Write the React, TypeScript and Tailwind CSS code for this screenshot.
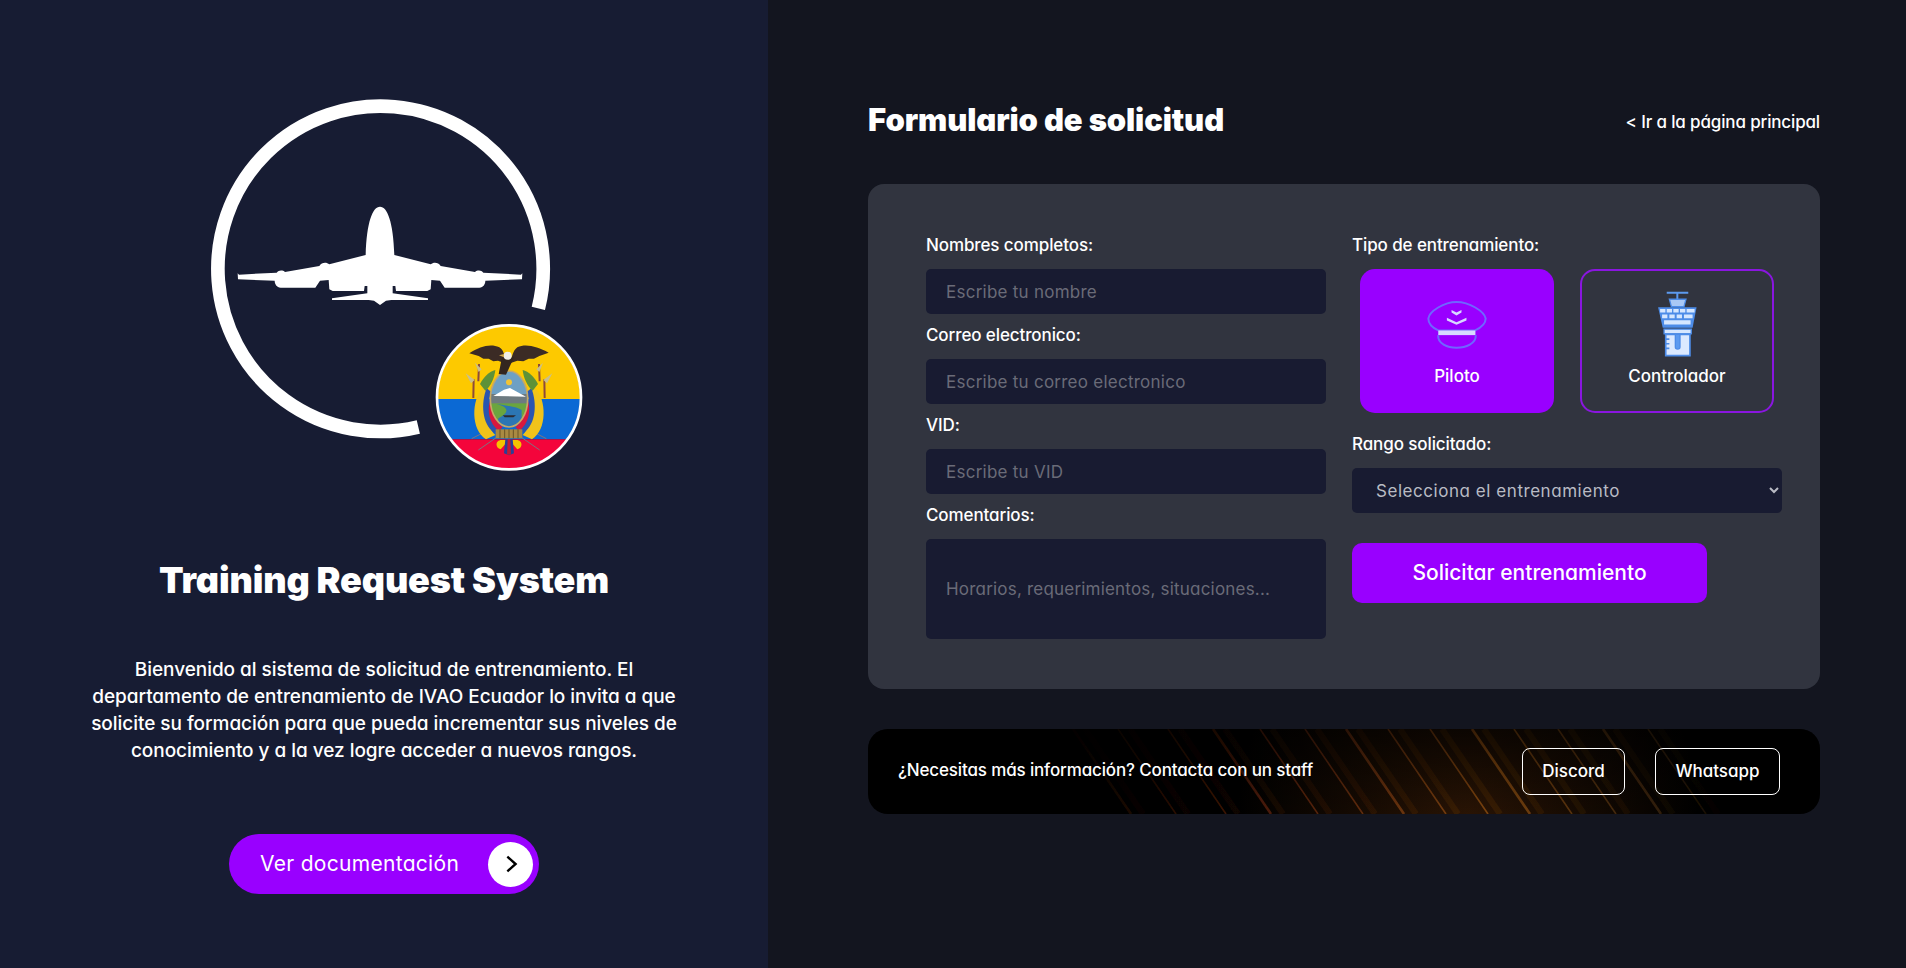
const Emblem = () => (
  <svg viewBox="0 0 1260 1200" className="w-[420px] h-[400px] ml-8 shrink-0">
    <path d="M1045 685 A488 488 0 1 0 685 1041" fill="none" stroke="#fff" strokeWidth="41" />
    {/* plane */}
    <path
      fill="#fff"
      d="M570 380 C592 380 610 425 613 525 L722 553 C730 546 745 546 752 558 L855 576 C862 570 874 570 880 578 L993 584 L997 580 L996 598 L886 602 C886 612 880 622 868 623 L764 623 L750 602 L724 600 L722 628 L712 633 L618 633 L616 618 L608 618 L608 640 L714 655 L714 660 L604 660 L588 662 L570 675 L552 662 L536 660 L426 660 L426 655 L532 640 L532 618 L524 618 L522 633 L428 633 L418 628 L416 600 L390 602 L376 623 L272 623 C260 622 254 612 254 602 L144 598 L143 580 L147 584 L260 578 C266 570 278 570 285 576 L388 558 C395 546 410 546 418 553 L527 525 C530 425 548 380 570 380 Z"
    />
    {/* flag, coordinates relative to the badge crop */}
    <g transform="translate(720 720)">
      <defs>
        <clipPath id="flagClip">
          <circle cx="237" cy="232" r="214" />
        </clipPath>
        <clipPath id="ovalClip">
          <ellipse cx="237" cy="237" rx="56" ry="84" />
        </clipPath>
      </defs>
      <g clipPath="url(#flagClip)">
        <rect x="0" y="0" width="480" height="237" fill="#fdc900" />
        <rect x="0" y="237" width="480" height="121" fill="#0b69d4" />
        <rect x="0" y="358" width="480" height="130" fill="#f4053b" />
      </g>
      <circle cx="237" cy="232" r="216" fill="none" stroke="#fff" strokeWidth="8" />
      {/* spears */}
      <path d="M145 390 L200 352 M329 390 L274 352 M125 356 L160 338 M349 356 L314 338" stroke="#7d7480" strokeWidth="3" />
      {/* drapes */}
      {[0, 1].map((side) => (
        <g key={side} transform={side ? 'translate(474 0) scale(-1 1)' : undefined}>
          <path d="M158 205 C124 240 122 330 168 358 L196 345 C168 320 164 250 180 212 Z" fill="#f0c31a" />
          <path d="M170 205 C152 250 156 312 192 338 L206 330 C176 305 170 250 184 216 Z" fill="#2a55b0" />
          <path d="M181 238 C170 272 178 312 206 332 L218 322 C192 300 184 268 188 234 Z" fill="#d8183e" />
          <path d="M147 132 L145 184 M131 178 L130 234" stroke="#8c4a3c" strokeWidth="6" />
          <path d="M135 128 L155 148 L146 156 Z M107 160 L134 180 L123 190 Z" fill="#c9bf8c" />
          <path d="M150 192 C160 172 178 154 196 150 C194 172 182 200 166 212 Z" fill="#5e9138" />
        </g>
      ))}
      {/* oval */}
      <g clipPath="url(#ovalClip)">
        <rect x="170" y="150" width="140" height="80" fill="#6ea0c4" />
        <rect x="170" y="222" width="140" height="30" fill="#6d7a80" />
        <path d="M190 228 L222 209 L240 204 L262 216 L288 230 Z" fill="#fff" />
        <rect x="170" y="250" width="140" height="80" fill="#6aa53f" />
        <path d="M200 252 C250 265 225 285 205 295 L200 325 L275 325 L275 270 C262 262 240 258 200 252 Z" fill="#2c76b4" />
        <path d="M218 286 L258 286 L250 292 L224 292 Z" fill="#2b2b33" />
        <circle cx="237" cy="187" r="9" fill="#f3c433" />
      </g>
      <ellipse cx="237" cy="237" rx="56" ry="84" fill="none" stroke="#c5a868" strokeWidth="5" />
      {/* fasces and ribbon */}
      <path d="M215 360 C195 360 195 385 212 388 L237 360 L262 388 C279 385 279 360 259 360 Z" fill="#f5c400" />
      <path d="M226 358 L222 400 L237 406 L252 400 L248 358 Z" fill="#2a3f96" />
      <path d="M233 358 L231 404 L243 404 L241 358 Z" fill="#c21a35" />
      <rect x="197" y="328" width="80" height="27" fill="#a98a42" />
      <path d="M210 328 V355 M224 328 V355 M237 328 V355 M250 328 V355 M264 328 V355" stroke="#6a5424" strokeWidth="3" />
      {/* condor */}
      <path d="M118 100 C150 80 180 70 208 82 C222 92 226 108 220 128 L204 122 L190 124 L176 116 L160 116 L146 108 Z" fill="#3b2b25" />
      <path d="M356 98 C322 80 288 70 262 82 C248 92 246 112 240 130 L262 122 L280 124 L296 116 L312 116 L328 108 Z" fill="#3b2b25" />
      <path d="M216 112 L252 112 L228 164 L206 162 Z" fill="#33261f" />
      <circle cx="233" cy="107" r="12" fill="#f1efe8" />
      <path d="M222 102 L207 106 L222 112 Z" fill="#d3a94a" />
    </g>
  </svg>
)

const HatIcon = () => (
  <svg viewBox="260 142 190 155" className="w-[63px] h-[52px]">
    <path d="M297 236 C280 228 267 215 267 200 C270 178 315 150 352 150 C390 150 436 178 440 200 C440 215 425 228 408 236 Z" fill="none" stroke="#6f66ff" strokeWidth="6" />
    <rect x="297" y="236" width="112" height="14" fill="#d7d9ff" />
    <path d="M297 250 C294 275 325 288 352 288 C380 288 412 275 410 250" fill="none" stroke="#6f66ff" strokeWidth="6" />
    <path d="M337 174 L352 182 L367 174 L367 182 L352 191 L337 182 Z" fill="#d7d9ff" />
    <path d="M323 198 L352 211 L382 198 L382 206 L352 219 L323 206 Z" fill="#d7d9ff" />
  </svg>
)

const TowerIcon = () => (
  <svg viewBox="945 118 135 205" className="w-[45px] h-[68px]">
    <path d="M980 126 H1045 M1012 126 V146" stroke="#5c9af0" strokeWidth="6" />
    <path d="M988 146 H1038 L1032 168 H994 Z" fill="#a9c8f5" stroke="#4d8ce8" strokeWidth="4" />
    <path d="M954 170 H1070 L1058 232 H968 Z" fill="#4d8ce8" />
    <path
      fill="#d6e7ff"
      d="M960 175 H976 V186 H960 Z M980 175 H996 V186 H980 Z M1000 175 H1016 V186 H1000 Z M1020 175 H1036 V186 H1020 Z M1040 175 H1064 V186 H1040 Z M966 192 H982 V203 H966 Z M988 192 H1004 V203 H988 Z M1010 192 H1026 V203 H1010 Z M1032 192 H1058 V203 H1032 Z M972 209 H1052 V222 H972 Z"
    />
    <rect x="972" y="236" width="82" height="14" fill="#d6e7ff" stroke="#4d8ce8" strokeWidth="4" />
    <path d="M977 252 H1050 V316 H977 Z" fill="#dbe9ff" stroke="#4d8ce8" strokeWidth="5" />
    <path d="M1006 254 V290 C1006 298 1020 298 1020 290 V254" fill="#5c9af0" stroke="#4d8ce8" strokeWidth="4" />
    <path d="M977 266 H988 M977 280 H988 M977 294 H988" stroke="#4d8ce8" strokeWidth="5" />
  </svg>
)

const Streaks = () => {
  const tops = [205, 250, 300, 345, 392, 437, 478, 520, 562, 604, 646, 690, 735, 780]
  return (
    <svg viewBox="0 0 952 85" preserveAspectRatio="none" className="absolute inset-0 w-full h-full">
      <defs>
        <linearGradient id="streakFade" gradientUnits="userSpaceOnUse" x1="170" y1="0" x2="900" y2="0">
          <stop offset="0" stopColor="#4a1a08" stopOpacity="0" />
          <stop offset="0.3" stopColor="#5e200a" stopOpacity="0.75" />
          <stop offset="0.62" stopColor="#7c4410" stopOpacity="1" />
          <stop offset="0.85" stopColor="#4e3010" stopOpacity="0.6" />
          <stop offset="1" stopColor="#3a2410" stopOpacity="0" />
        </linearGradient>
        <linearGradient id="streakTop" x1="0" y1="0" x2="0" y2="1">
          <stop offset="0" stopColor="#000" stopOpacity="0.55" />
          <stop offset="1" stopColor="#000" stopOpacity="0" />
        </linearGradient>
        <radialGradient id="streakGlow" gradientUnits="userSpaceOnUse" cx="600" cy="85" r="230">
          <stop offset="0" stopColor="#4a2408" stopOpacity="0.55" />
          <stop offset="1" stopColor="#4a2408" stopOpacity="0" />
        </radialGradient>
        <filter id="streakBlur">
          <feGaussianBlur stdDeviation="0.5" />
        </filter>
      </defs>
      <rect width="952" height="85" fill="url(#streakGlow)" />
      <g filter="url(#streakBlur)">
        {tops.map((x, i) => (
          <g key={x} stroke="url(#streakFade)">
            <path d={`M${x} 0 L${x + 58} 85`} strokeWidth={i % 3 === 0 ? 2.6 : 1.6} />
            <path d={`M${x + 12} 0 L${x + 70} 85`} strokeWidth="6" strokeOpacity="0.22" />
          </g>
        ))}
      </g>
      <rect width="952" height="85" fill="url(#streakTop)" />
    </svg>
  )
}

const Label = ({children}: {children: string}) => (
  <label className="h-[45px] pb-px flex items-center text-[17px] font-medium tracking-[-0.1px] text-white">{children}</label>
)

const Field = ({label, placeholder}: {label: string, placeholder: string}) => (
  <div>
    <Label>{label}</Label>
    <input
      placeholder={placeholder}
      className="w-full h-[45px] px-5 rounded-[5px] bg-[#181b31] text-white text-[17px] tracking-[0.25px] outline-none placeholder:text-[#6a6b78]"
    />
  </div>
)

export default function App() {
  return (
    <div className="flex w-full min-h-[968px] bg-[#13151f] text-white [font-family:Inter,sans-serif] [font-feature-settings:'cv11']">
      <aside className="w-[768px] shrink-0 bg-[#171c33] flex flex-col items-center pt-20">
        <Emblem />
        <h2 className="mt-[76px] text-[36px] leading-[48px] font-black tracking-[-0.15px]">Training Request System</h2>
        <p className="mt-[52px] text-center text-[19px] leading-[27px] font-medium tracking-[-0.04px]">
          Bienvenido al sistema de solicitud de entrenamiento. El<br />
          departamento de entrenamiento de IVAO Ecuador lo invita a que<br />
          solicite su formación para que pueda incrementar sus niveles de<br />
          conocimiento y a la vez logre acceder a nuevos rangos.
        </p>
        <a className="mt-[70px] w-[310px] h-[60px] rounded-full bg-[#9900ff] flex items-center justify-between pl-[31px] pr-[6px] text-[21px] tracking-[0.3px]">
          <span>Ver documentación</span>
          <span className="w-[45px] h-[45px] rounded-full bg-white flex items-center justify-center">
            <svg viewBox="0 0 24 24" className="w-[22px] h-[22px]" fill="none" stroke="#000" strokeWidth="2.6">
              <path d="M8 4 L17 12 L8 20" />
            </svg>
          </span>
        </a>
      </aside>

      <main className="w-[952px] ml-[100px] pt-[96px]">
        <div className="h-[48px] flex items-center justify-between">
          <h1 className="text-[31px] font-black tracking-[-0.1px]">Formulario de solicitud</h1>
          <a className="text-[17px] font-medium tracking-[-0.15px] mt-[6px]">&lt; Ir a la página principal</a>
        </div>

        <section className="mt-10 h-[505px] rounded-2xl bg-[#31343f] pt-10 pl-[58px] grid grid-cols-[400px_430px] gap-x-[26px] items-start">
          <div>
            <Field label="Nombres completos:" placeholder="Escribe tu nombre" />
            <Field label="Correo electronico:" placeholder="Escribe tu correo electronico" />
            <Field label="VID:" placeholder="Escribe tu VID" />
            <Label>Comentarios:</Label>
            <textarea
              placeholder="Horarios, requerimientos, situaciones..."
              className="block w-full h-[100px] px-5 pt-[38px] rounded-[5px] bg-[#181b31] text-[17px] tracking-[0.2px] resize-none outline-none placeholder:text-[#6a6b78]"
            />
          </div>

          <div>
            <Label>Tipo de entrenamiento:</Label>
            <div className="flex gap-[26px] pl-2">
              <button className="w-[194px] h-[144px] rounded-[15px] bg-[#9900ff] flex flex-col items-center pt-[30px]">
                <HatIcon />
                <span className="mt-[13px] text-[17px] leading-6 font-medium">Piloto</span>
              </button>
              <button className="w-[194px] h-[144px] rounded-[15px] border-2 border-[#8a16e0] flex flex-col items-center pt-[19px]">
                <TowerIcon />
                <span className="mt-[6px] text-[17px] leading-6 font-medium">Controlador</span>
              </button>
            </div>
            <div className="mt-[10px]">
              <Label>Rango solicitado:</Label>
            </div>
            <select className="w-full h-[45px] pl-5 rounded-[5px] bg-[#181b31] text-[17px] tracking-[0.55px] text-[#b9bbc4] outline-none">
              <option>Selecciona el entrenamiento</option>
            </select>
            <button className="mt-[30px] w-[355px] h-[60px] rounded-[10px] bg-[#9900ff] text-[21px] font-medium">Solicitar entrenamiento</button>
          </div>
        </section>

        <section className="relative mt-10 h-[85px] rounded-[20px] bg-black overflow-hidden flex items-center pl-[30px] pr-10">
          <Streaks />
          <p className="relative pb-[2px] text-[17px] font-medium tracking-[-0.15px]">¿Necesitas más información? Contacta con un staff</p>
          <div className="relative ml-auto flex gap-[30px]">
            <a className="h-[47px] w-[103px] rounded-lg border border-white flex items-center justify-center text-[17px] font-medium">Discord</a>
            <a className="h-[47px] w-[125px] rounded-lg border border-white flex items-center justify-center text-[17px] font-medium">Whatsapp</a>
          </div>
        </section>
      </main>
    </div>
  )
}
